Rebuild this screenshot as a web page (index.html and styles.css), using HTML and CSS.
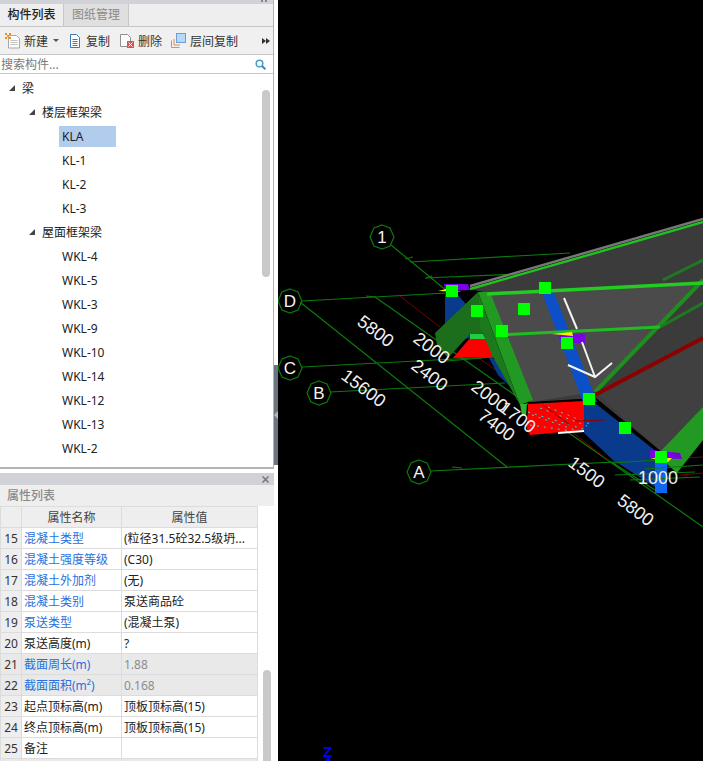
FILE: index.html
```html
<!DOCTYPE html>
<html lang="zh">
<head>
<meta charset="utf-8">
<title>构件列表</title>
<link rel="stylesheet" href="styles.css">
</head>
<body>
<div class="app">
  <aside class="side">
    <section class="panel-top">
      <div class="grip"><svg class="grip-x" viewBox="0 0 6 3"><path d="M0 0h2v2H0zM4 0h2v2H4z" fill="#8a8a8a"/></svg></div>
      <div class="tabs">
        <div class="tab tab-on">构件列表</div>
        <div class="tab tab-off">图纸管理</div>
      </div>
      <div class="toolbar">
        <span class="tool tool-new">
          <svg class="ico" viewBox="0 0 16 16"><path d="M3.5 2.5h8l3 3v9.500h-11z" fill="#fbfbfb" stroke="#a8a8a8"/><path d="M5.500 7.500h7M5.500 9.500h7M5.500 11.500h7" stroke="#c4c4c4"/><path d="M0 0h2v2H0zM4 0h2v2H4zM2 2h2v2H2zM0 4h2v2H0zM4 4h2v2H4z" fill="#f08a1c"/></svg>
          <span>新建</span>
          <i class="caret"></i>
        </span>
        <span class="tool tool-copy">
          <svg class="ico" viewBox="0 0 16 16"><path d="M3.500 1.500h6l3 3v10h-9z" fill="#fff" stroke="#3d78b8"/><path d="M5.500 6.500h5M5.500 8.500h5M5.500 10.500h5M5.500 12.500h5" stroke="#3d78b8"/></svg>
          <span>复制</span>
        </span>
        <span class="tool tool-del">
          <svg class="ico" viewBox="0 0 16 16"><path d="M1.500 1.500h7l3 3v9h-10z" fill="#fafafa" stroke="#909090"/><rect x="8" y="8" width="7" height="7" fill="#e2504c"/><path d="M9.500 9.500l4 4M13.500 9.500l-4 4" stroke="#fff"/></svg>
          <span>删除</span>
        </span>
        <span class="tool tool-floor">
          <svg class="ico" viewBox="0 0 16 16"><path d="M.5 14.500V7.500M.5 14.500h8M3 12V6M3 12h6" stroke="#e88a3c" fill="none"/><rect x="5.500" y=".5" width="9" height="9" fill="#b8d8fa" stroke="#6a9fdc"/></svg>
          <span>层间复制</span>
        </span>
        <span class="more"><i class="more-tri"></i><i class="more-tri"></i></span>
      </div>
      <div class="search">
        <span class="search-text">搜索构件...</span>
        <svg class="search-ico" viewBox="0 0 11 11"><circle cx="4.500" cy="4.500" r="3.300" fill="none" stroke="#4d9ad0" stroke-width="1.500"/><path d="M7 7l3.300 3.300" stroke="#3a87c0" stroke-width="2"/></svg>
      </div>
      <div class="tree-wrap">
        <ul class="tree">
          <li class="node lv0"><i class="tri"></i><span>梁</span></li>
          <li class="node lv1"><i class="tri"></i><span>楼层框架梁</span></li>
          <li class="node lv2"><span class="sel">KLA</span></li>
          <li class="node lv2"><span class="leaf">KL-1</span></li>
          <li class="node lv2"><span class="leaf">KL-2</span></li>
          <li class="node lv2"><span class="leaf">KL-3</span></li>
          <li class="node lv1"><i class="tri"></i><span>屋面框架梁</span></li>
          <li class="node lv2"><span class="leaf">WKL-4</span></li>
          <li class="node lv2"><span class="leaf">WKL-5</span></li>
          <li class="node lv2"><span class="leaf">WKL-3</span></li>
          <li class="node lv2"><span class="leaf">WKL-9</span></li>
          <li class="node lv2"><span class="leaf">WKL-10</span></li>
          <li class="node lv2"><span class="leaf">WKL-14</span></li>
          <li class="node lv2"><span class="leaf">WKL-12</span></li>
          <li class="node lv2"><span class="leaf">WKL-13</span></li>
          <li class="node lv2"><span class="leaf">WKL-2</span></li>
        </ul>
        <div class="rail rail-tree"><div class="thumb thumb-tree"></div></div>
      </div>
    </section>
    <section class="panel-bottom">
      <div class="prop-head"><svg class="close" viewBox="0 0 7 7"><path d="M.5.5l6 6M6.500.5l-6 6" stroke="#777" stroke-width="1.500"/></svg></div>
      <div class="prop-title">属性列表</div>
      <div class="prop-body">
        <table class="props">
          <colgroup><col class="c-num"><col class="c-name"><col class="c-val"></colgroup>
          <thead><tr><th></th><th>属性名称</th><th>属性值</th></tr></thead>
          <tbody>
            <tr><td class="num">15</td><td class="link">混凝土类型</td><td>(粒径31.5砼32.5级坍...</td></tr>
            <tr><td class="num">16</td><td class="link">混凝土强度等级</td><td>(C30)</td></tr>
            <tr><td class="num">17</td><td class="link">混凝土外加剂</td><td>(无)</td></tr>
            <tr><td class="num">18</td><td class="link">混凝土类别</td><td>泵送商品砼</td></tr>
            <tr><td class="num">19</td><td class="link">泵送类型</td><td>(混凝土泵)</td></tr>
            <tr><td class="num">20</td><td>泵送高度(m)</td><td>?</td></tr>
            <tr class="ro"><td class="num">21</td><td class="link">截面周长(m)</td><td>1.88</td></tr>
            <tr class="ro"><td class="num">22</td><td class="link">截面面积(m²)</td><td>0.168</td></tr>
            <tr><td class="num">23</td><td>起点顶标高(m)</td><td>顶板顶标高(15)</td></tr>
            <tr><td class="num">24</td><td>终点顶标高(m)</td><td>顶板顶标高(15)</td></tr>
            <tr><td class="num">25</td><td>备注</td><td></td></tr>
            <tr class="ro"><td class="num"></td><td></td><td></td></tr>
          </tbody>
        </table>
        <div class="rail rail-prop"><div class="thumb thumb-prop"></div></div>
      </div>
    </section>
  </aside>
  <div class="split"><div class="split-handle"><i class="split-arrow"></i></div></div>
  <main class="view">
    <svg class="scene" viewBox="278 0 425 761" xmlns="http://www.w3.org/2000/svg">
      <!-- axis grid behind the model -->
      <g class="axis">
        <path d="M391 245L447 291M302 301L447 293M302 367L493 357M330 392L505 383M430 471L657 460M300 302L507 467M375 297L703 527"/>
        <path d="M410 262L570 253M425 278L520 274"/>
        <path d="M405 259l8-2M426 278l6-2M366 296l10 1M452 467l10 1"/>
      </g>
      <g class="axis-red">
        <path d="M400 296L440 327M463 347L500 373M573 433L608 460"/>
        <path d="M682 458L703 457M680 475L703 473"/>
      </g>

      <!-- roof surfaces -->
      <polygon points="470,289 703,222 703,410 662,452 596,398 530,402 488,293" fill="#3b3b3b"/>
      <polygon points="488,294 703,282 595,392 530,402" fill="#4b4b4b"/>
      <polygon points="595,392 703,340 703,410 662,452" fill="#404040"/>
      <path d="M470 286L703 219" stroke="#777" stroke-width="2.500"/>
      <path d="M470 289L703 222" stroke="#22c022" stroke-width="2.500"/>

      <!-- lower blue run -->
      <polygon points="445,293 456,293 490,331 445,346" fill="#0a3a8c"/>
      <polygon points="488,356 500,362 512,388 498,375" fill="#0a3a8c"/>
      <polygon points="584,403 595,403 657,452 668,465 655,487 613,460 584,433" fill="#0a3a8c"/>
      <polygon points="541,290 553,290 597,402 583,402" fill="#0b50c8"/>
      <rect x="655" y="460" width="12" height="33" fill="#1166ee"/>

      <!-- red pads -->
      <polygon points="453,358 470,338 493,338 493,357" fill="#ff0000"/>
      <polygon points="470,334 483,334 486,339 470,339" fill="#22cc44"/>
      <polygon points="528,404 584,401 584,430 530,435 527,430" fill="#ff0000"/>
      <path d="M558 433L584 431" stroke="#fff" stroke-width="2"/>
      <path d="M528 412L583 429M532 415L575 430M540 408L587 426M548 407L590 424M530 425L572 431" stroke="#34d8e0" stroke-dasharray="2 5" fill="none"/>
      <path d="M543 405L570 425M575 421L605 420" stroke="#8b0000" fill="none"/>

      <!-- green beams -->
      <polygon points="660,452 703,407 703,440 677,473 668,465" fill="#229922"/>
      <polygon points="435,333 478,292 482,327 483,334 470,334 448,358 437,345" fill="#1c6e1c"/>
      <polygon points="478,292 490,292 533,400 520,405" fill="#229922"/>
      <polygon points="478,292 520,405 493,357 480,327" fill="#1c7a1c"/>
      <polygon points="520,404 527,404 526,416 522,416" fill="#2fb52f"/>
      <path d="M595 392L703 280" stroke="#1e8e1e" stroke-width="4"/>
      <path d="M660 327L703 303M663 280L703 260" stroke="#1e7a1e" stroke-width="3"/>
      <path d="M595 395L703 338" stroke="#8b0000" stroke-width="4"/>
      <path d="M487 294L703 283" stroke="#22cc22" stroke-width="3.500"/>
      <path d="M498 335L660 327" stroke="#22bb22" stroke-width="3"/>

      <!-- grid lines that show over the model -->
      <g class="axis">
        <path d="M447 361L493 357M613 463L657 460M645 469L703 465M615 475L695 472M630 480L700 477M613 463L655 490"/>
      </g>

      <!-- purple caps and yellow tips -->
      <polygon points="444,284 468,284 470,290 445,291" fill="#7a00e6"/>
      <polygon points="438,291 446,289 462,292" fill="#ffee00"/>
      <polygon points="558,335 585,334 585,343 562,343" fill="#7a00e6"/>
      <polygon points="552,334 572,332 573,336" fill="#ffee00"/>
      <polygon points="650,450 680,453 682,459 650,458" fill="#7a00e6"/>
      <polygon points="650,458 672,458 668,462" fill="#ffee00"/>

      <!-- white direction arrow -->
      <path d="M564 298L577 329M582 342L595 377M568 365L595 377L612 363" stroke="#f4f4f4" stroke-width="2" fill="none"/>

      <!-- grips -->
      <g fill="#00ff00">
        <rect x="446" y="285" width="12" height="12"/>
        <rect x="471" y="305" width="12" height="12"/>
        <rect x="518" y="303" width="12" height="12"/>
        <rect x="539" y="282" width="12" height="12"/>
        <rect x="496" y="325" width="12" height="12"/>
        <rect x="561" y="337" width="12" height="12"/>
        <rect x="583" y="393" width="12" height="12"/>
        <rect x="619" y="422" width="12" height="12"/>
        <rect x="655" y="451" width="12" height="12"/>
      </g>

      <!-- axis bubbles -->
      <g class="bubble"><polygon points="382,225 390,228 394,237 390,246 382,249 374,246 370,237 374,228"/><text x="382" y="243">1</text></g>
      <g class="bubble"><polygon points="290,289 298,292 302,301 298,310 290,313 282,310 278,301 282,292"/><text x="290" y="307">D</text></g>
      <g class="bubble"><polygon points="290,356 298,359 302,368 298,377 290,380 282,377 278,368 282,359"/><text x="290" y="374">C</text></g>
      <g class="bubble"><polygon points="319,381 327,384 331,393 327,402 319,405 311,402 307,393 311,384"/><text x="319" y="399">B</text></g>
      <g class="bubble"><polygon points="419,460 427,463 431,472 427,481 419,484 411,481 407,472 411,463"/><text x="419" y="478">A</text></g>

      <!-- dimensions -->
      <g class="dim">
        <text transform="translate(372 336) rotate(37)">5800</text>
        <text transform="translate(428 353) rotate(37)">2000</text>
        <text transform="translate(426 380) rotate(37)">2400</text>
        <text transform="translate(360 393) rotate(37)">15600</text>
        <text transform="translate(486 401) rotate(37)">2000</text>
        <text transform="translate(514 422) rotate(37)">1700</text>
        <text transform="translate(493 430) rotate(37)">7400</text>
        <text transform="translate(583 477) rotate(37)">1500</text>
        <text transform="translate(632 515) rotate(37)">5800</text>
        <text x="658" y="484">1000</text>
      </g>

      <text class="z-label" x="323" y="757">Z</text>
      <polygon points="328,757 331,761 325,761" fill="#0000ff"/>
    </svg>
  </main>
</div>
</body>
</html>
```
FILE: styles.css
```css
* { box-sizing: border-box; }
html, body { margin: 0; height: 100%; overflow: hidden; background: #fff; }
body {
  font-family: "Noto Sans", "Noto Sans CJK SC", sans-serif;
  font-size: 12px;
  color: #1c1c1c;
}
ul { list-style: none; margin: 0; padding: 0; }
i { display: block; }

.app { display: flex; width: 703px; height: 761px; }
.side { width: 274px; display: flex; flex-direction: column; flex: none; }
.split { width: 4px; flex: none; background: #fff; }
.split-handle {
  margin-top: 365px;
  height: 100px;
  background: #6b7580;
  display: flex;
  align-items: center;
}
.split-arrow {
  width: 0;
  height: 0;
  border-top: 4px solid transparent;
  border-bottom: 4px solid transparent;
  border-right: 4px solid #b4bac0;
}
.view { flex: 1; background: #000; min-width: 0; }
.scene { display: block; width: 425px; height: 761px; }

/* upper panel */
.panel-top {
  height: 469px;
  flex: none;
  border-right: 1px solid #b4b4b4;
  border-bottom: 2px solid #b4b4b4;
  display: flex;
  flex-direction: column;
}
.grip {
  height: 4px;
  background: #d0d2d8;
  flex: none;
  display: flex;
  justify-content: flex-end;
  padding-right: 6px;
}
.grip-x { width: 6px; height: 3px; display: block; }
.tabs {
  height: 23px;
  flex: none;
  display: flex;
  background: #eeeeee;
  border-bottom: 1px solid #c6c6c6;
}
.tab { height: 22px; line-height: 21px; text-align: center; width: 64px; }
.tab-on { color: #222; font-weight: 500; border-right: 1px solid #c6c6c6; }
.tab-off { background: #dfdfdf; color: #8a8a8a; border-right: 1px solid #c6c6c6; width: 65px; }

.toolbar {
  height: 28px;
  flex: none;
  display: flex;
  align-items: center;
  background: #f0f0f0;
  border-bottom: 1px solid #c6c6c6;
  padding-left: 4px;
}
.tool { display: flex; align-items: center; gap: 3px; color: #333; }
.ico { width: 16px; height: 16px; display: block; flex: none; }
.tool-new { width: 63px; }
.tool-copy { width: 52px; }
.tool-del { width: 52px; }
.tool-floor { width: 80px; }
.tool-new .ico { margin-left: 1px; }
.caret {
  margin-left: 2px;
  width: 0;
  height: 0;
  border-left: 3px solid transparent;
  border-right: 3px solid transparent;
  border-top: 3px solid #555;
}
.more { display: flex; margin-left: auto; margin-right: 3px; }
.more-tri {
  width: 0;
  height: 0;
  border-top: 3.500px solid transparent;
  border-bottom: 3.500px solid transparent;
  border-left: 4px solid #333;
}

.search {
  height: 19px;
  flex: none;
  display: flex;
  align-items: center;
  justify-content: space-between;
  padding: 0 7px 0 1px;
  background: #fff;
  border-bottom: 1px solid #c6c6c6;
  color: #7a7a7a;
}
.search-ico { width: 11px; height: 11px; display: block; }

.tree-wrap { flex: 1; display: flex; min-height: 0; overflow: hidden; }
.tree { flex: 1; padding-top: 2px; }
.node { height: 24px; display: flex; align-items: center; color: #222; }
.lv0 { padding-left: 9px; }
.lv1 { padding-left: 29px; }
.lv2 { padding-left: 59px; }
.tri {
  width: 6px;
  height: 6px;
  margin-right: 7px;
  background: #444;
  clip-path: polygon(100% 0, 100% 100%, 0 100%);
}
.leaf { padding-left: 3px; }
.sel {
  width: 57px;
  height: 21px;
  line-height: 21px;
  padding-left: 3px;
  background: #b1cced;
}
.rail { width: 8px; margin-right: 3px; flex: none; }
.thumb { width: 8px; background: #c9c9c9; border-radius: 4px; }
.thumb-tree { margin-top: 16px; height: 187px; }

/* lower panel */
.panel-bottom {
  flex: 1;
  min-height: 0;
  margin-top: 4px;
  display: flex;
  flex-direction: column;
  overflow: hidden;
}
.prop-head {
  height: 12px;
  flex: none;
  background: #d0d2d8;
  display: flex;
  justify-content: flex-end;
  align-items: center;
  padding-right: 5px;
}
.close { width: 7px; height: 7px; display: block; }
.prop-title {
  height: 21px;
  flex: none;
  line-height: 21px;
  padding-left: 7px;
  background: #eeeeee;
  color: #8a8a8a;
  font-weight: 500;
}
.prop-body { flex: 1; display: flex; justify-content: space-between; min-height: 0; }
.props {
  width: 257px;
  flex: none;
  table-layout: fixed;
  border-collapse: collapse;
  align-self: flex-start;
}
.c-num { width: 21px; }
.c-name { width: 100px; }
.c-val { width: 136px; }
.props th, .props td {
  height: 21px;
  padding: 0 0 0 2px;
  border: 1px solid #dcdcdc;
  white-space: nowrap;
  overflow: hidden;
  font-weight: 400;
  color: #222;
}
.props th {
  background: #eeeeee;
  color: #444;
  text-align: center;
  padding: 0;
}
.props td.num { background: #eeeeee; color: #333; padding: 0; text-align: center; }
.props td.link { color: #2a6fdc; }
.props .ro td { background: #e9e9e9; color: #8c8c8c; }
.props .ro td.link { color: #2a6fdc; }
.props .ro td.num { color: #333; }
.thumb-prop { margin-top: 164px; height: 140px; }

/* 3D view */
.axis path { stroke: #0c7a0c; stroke-width: 1.200; fill: none; }
.axis-red path { stroke: #7a0000; stroke-width: 1; fill: none; }
.bubble polygon { fill: none; stroke: #0c7a0c; stroke-width: 1.200; }
.bubble text {
  font-family: "Liberation Sans", sans-serif;
  font-size: 17px;
  fill: #f4f4f4;
  text-anchor: middle;
}
.dim text {
  font-family: "Liberation Sans", sans-serif;
  font-size: 18px;
  fill: #f0f0f0;
  text-anchor: middle;
}
.z-label {
  font-family: "Liberation Sans", sans-serif;
  font-size: 15px;
  font-weight: 700;
  fill: #0000ff;
}
```
